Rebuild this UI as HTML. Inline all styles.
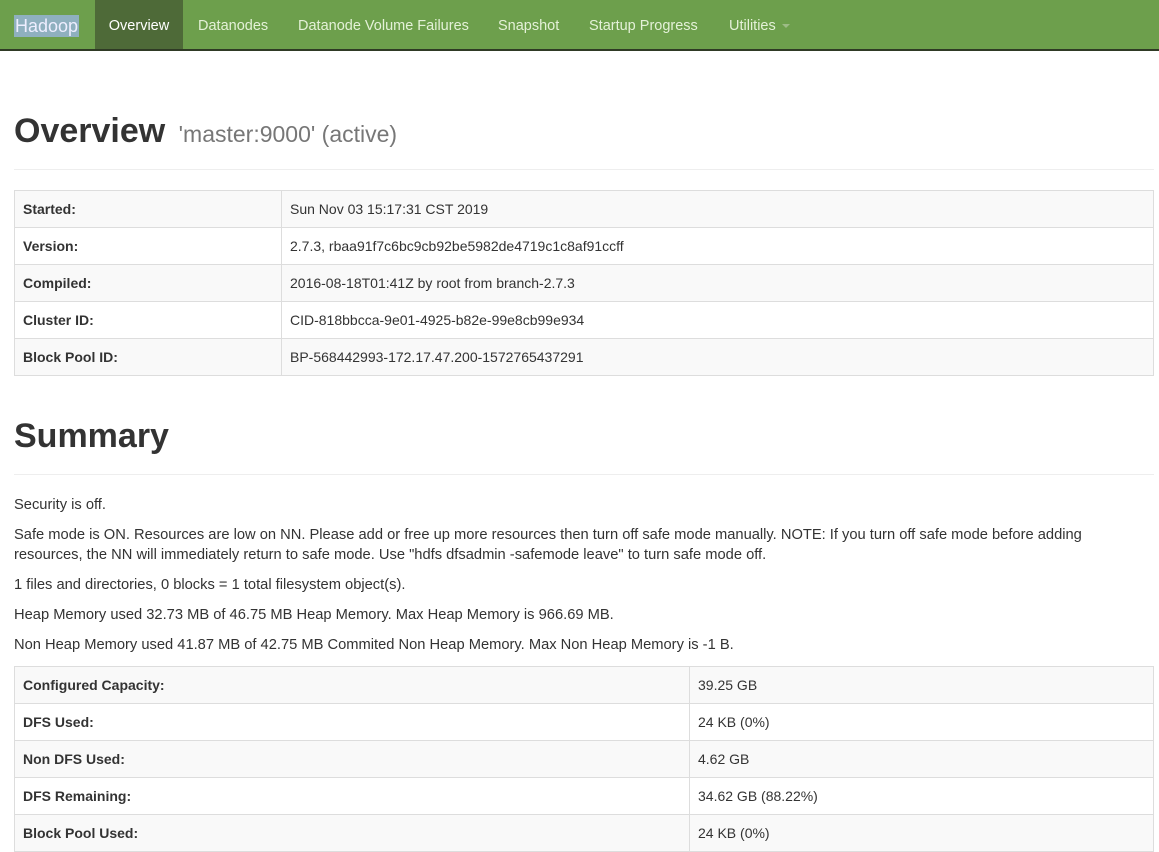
<!DOCTYPE html>
<html><head><meta charset="utf-8"><style>
*{box-sizing:border-box;margin:0;padding:0}
body{width:1159px;height:820px;overflow:hidden;background:#fff;font-family:"Liberation Sans",Helvetica,Arial,sans-serif;font-size:14px;color:#333}
.nav{position:absolute;left:0;top:0;width:1159px;height:51px;background:#6d9f4c;border-bottom:2px solid #2f3a25}
.nav span{position:absolute;top:0;height:49px;line-height:52px;color:#e4f1d8;font-size:14.5px}
.brand{left:14px;font-size:18px!important}
.brand i{font-style:normal;background:#8fb0bf;color:#eef;padding:1px 1px}
.act{left:95px;width:88px;background:#4e6a38;text-align:center;color:#fff!important}
.caret{display:inline-block;border-top:4px solid #9dbb86;border-left:4px solid transparent;border-right:4px solid transparent;vertical-align:middle;margin-left:6px}
h1{position:absolute;left:14px;font-size:34px;font-weight:bold;color:#333}
h1 small{font-size:23px;color:#777;font-weight:normal;margin-left:4px}
hr{position:absolute;left:14px;width:1140px;border:0;border-top:1px solid #eee}
table{position:absolute;left:14px;width:1140px;border-collapse:collapse;border:1px solid #ddd}
td{height:37px;border:1px solid #ddd;padding:0 8px;vertical-align:middle;font-size:14px}
tr:nth-child(odd) td{background:#f9f9f9}
td:first-child{font-weight:bold}
p{position:absolute;left:14px;width:1100px;line-height:20px;font-size:14.7px}
</style></head><body>
<div class="nav">
<span class="brand"><i>Hadoop</i></span>
<span class="act">Overview</span>
<span style="left:198px">Datanodes</span>
<span style="left:298px">Datanode Volume Failures</span>
<span style="left:498px">Snapshot</span>
<span style="left:589px">Startup Progress</span>
<span style="left:729px">Utilities<b class="caret"></b></span>
</div>
<h1 style="top:112px">Overview <small>'master:9000' (active)</small></h1>
<hr style="top:169px">
<table style="top:190px">
<tr><td style="width:267px">Started:</td><td>Sun Nov 03 15:17:31 CST 2019</td></tr>
<tr><td>Version:</td><td>2.7.3, rbaa91f7c6bc9cb92be5982de4719c1c8af91ccff</td></tr>
<tr><td>Compiled:</td><td>2016-08-18T01:41Z by root from branch-2.7.3</td></tr>
<tr><td>Cluster ID:</td><td>CID-818bbcca-9e01-4925-b82e-99e8cb99e934</td></tr>
<tr><td>Block Pool ID:</td><td>BP-568442993-172.17.47.200-1572765437291</td></tr>
</table>
<h1 style="top:417px">Summary</h1>
<hr style="top:474px">
<p style="top:495px">Security is off.</p>
<p style="top:525px">Safe mode is ON. Resources are low on NN. Please add or free up more resources then turn off safe mode manually. NOTE: If you turn off safe mode before adding<br>resources, the NN will immediately return to safe mode. Use "hdfs dfsadmin -safemode leave" to turn safe mode off.</p>
<p style="top:575px">1 files and directories, 0 blocks = 1 total filesystem object(s).</p>
<p style="top:605px">Heap Memory used 32.73 MB of 46.75 MB Heap Memory. Max Heap Memory is 966.69 MB.</p>
<p style="top:635px">Non Heap Memory used 41.87 MB of 42.75 MB Commited Non Heap Memory. Max Non Heap Memory is -1 B.</p>
<table style="top:666px">
<tr><td style="width:675px">Configured Capacity:</td><td>39.25 GB</td></tr>
<tr><td>DFS Used:</td><td>24 KB (0%)</td></tr>
<tr><td>Non DFS Used:</td><td>4.62 GB</td></tr>
<tr><td>DFS Remaining:</td><td>34.62 GB (88.22%)</td></tr>
<tr><td>Block Pool Used:</td><td>24 KB (0%)</td></tr>
</table>
</body></html>
